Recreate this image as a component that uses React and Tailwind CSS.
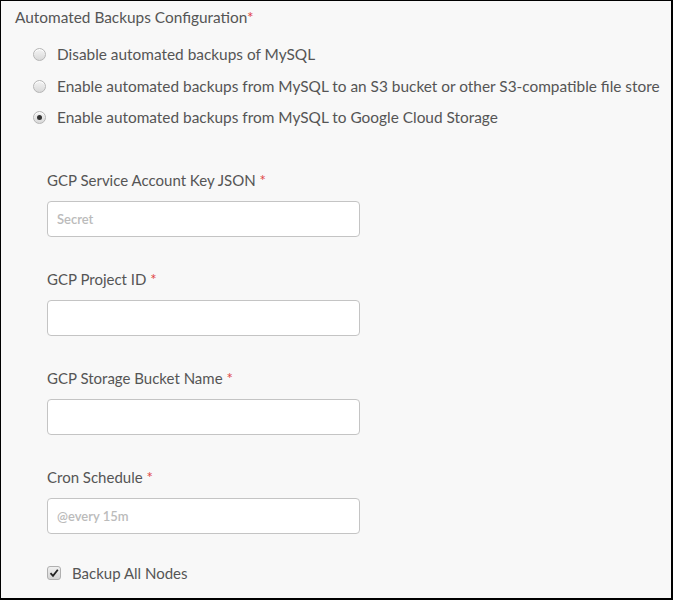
import { useState } from "react"

const options = [
  { id: "disable", label: "Disable automated backups of MySQL" },
  { id: "s3", label: "Enable automated backups from MySQL to an S3 bucket or other S3-compatible file store" },
  { id: "gcs", label: "Enable automated backups from MySQL to Google Cloud Storage" },
]

const fields = [
  { id: "key", label: "GCP Service Account Key JSON", placeholder: "Secret" },
  { id: "project", label: "GCP Project ID", placeholder: "" },
  { id: "bucket", label: "GCP Storage Bucket Name", placeholder: "" },
  { id: "cron", label: "Cron Schedule", placeholder: "@every 15m" },
]

function Radio({ checked }) {
  return (
    <span className="flex h-[13px] w-[13px] shrink-0 items-center justify-center rounded-full border border-[#b5b5b5] bg-gradient-to-b from-[#f4f4f4] to-[#d9d9d9] shadow-[inset_0_1px_0_#fff]">
      {checked && <span className="h-[5px] w-[5px] rounded-full bg-[#333]" />}
    </span>
  )
}

export default function App() {
  const [choice, setChoice] = useState("gcs")
  const [allNodes, setAllNodes] = useState(true)

  return (
    <div className="h-[600px] w-[673px] overflow-hidden border-t border-l border-r-2 border-b-2 border-black bg-[#f8f8f8] font-['Lato',sans-serif] text-[15.4px] text-[#555]">
      {/* Title */}
      <div className="pl-[14px] pt-[6px] leading-[20px]">
        Automated Backups Configuration<span className="text-[#e04444]">*</span>
      </div>

      {/* Radio options */}
      <div className="mt-[12px] pl-[32px]">
        {options.map((opt) => (
          <div
            key={opt.id}
            onClick={() => setChoice(opt.id)}
            className="flex h-[31.5px] cursor-pointer items-center gap-[11px] whitespace-nowrap"
          >
            <Radio checked={choice === opt.id} />
            <span>{opt.label}</span>
          </div>
        ))}
      </div>

      {/* Fields */}
      <div className="mt-[36px] pl-[46px] text-[15px]">
        {fields.map((f) => (
          <div key={f.id} className="mb-[32px]">
            <div className="leading-[20px]">
              {f.label} <span className="text-[#e04444]">*</span>
            </div>
            <input
              placeholder={f.placeholder}
              className="mt-[11px] block h-[36px] w-[313px] rounded-[4px] border border-[#c4c4c4] bg-white px-[9px] text-[13px] text-[#555] outline-none placeholder:font-semibold placeholder:text-[#bbb]"
            />
          </div>
        ))}

        <label className="-mt-[3px] flex cursor-pointer items-center gap-[11px] leading-[20px]">
          <span
            onClick={() => setAllNodes(!allNodes)}
            className="flex h-[14px] w-[14px] items-center justify-center rounded-[3px] border border-[#b0b0b0] bg-gradient-to-b from-[#f0f0f0] to-[#d4d4d4]"
          >
            {allNodes && (
              <svg width="10" height="10" viewBox="0 0 10 10">
                <path d="M1.5 5.2 L4 7.8 L8.8 1.8" fill="none" stroke="#222" strokeWidth="1.8" />
              </svg>
            )}
          </span>
          <span>Backup All Nodes</span>
        </label>
      </div>
    </div>
  )
}
